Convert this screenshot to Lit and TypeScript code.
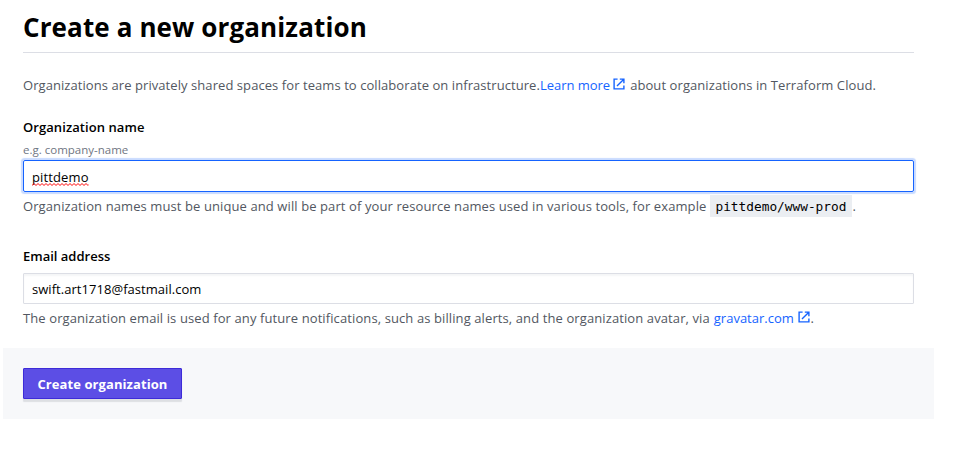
import { LitElement, html, css } from "lit";
import { customElement, state } from "lit/decorators.js";

const externalIcon = html`<svg class="ext" viewBox="0 0 12 12" width="12" height="12" aria-hidden="true">
  <path d="M4.6 1.1H1.1v9.8h9.8V7.4M6.8 1.1h4.1v4.1M10.8 1.2 4 8" fill="none" stroke="currentColor" stroke-width="1.4" />
</svg>`;

@customElement("app-root")
export class AppRoot extends LitElement {
  @state() private orgName = "pittdemo";
  @state() private email = "swift.art1718@fastmail.com";

  static styles = css`
    :host {
      display: block;
      height: 461px;
      overflow: hidden;
      background: #fff;
      color: #000;
      font: 13px/20px "Open Sans", "Noto Sans", sans-serif;
      white-space: nowrap;
    }
    .page { width: 891px; margin-left: 23px; }
    h1 {
      margin: 0;
      padding-top: 3px;
      border-bottom: 1px solid #dcdee5;
      font-size: 26px;
      line-height: 49px;
      font-weight: 700;
      letter-spacing: 0.12px;
    }
    p { margin: 0; color: #525761; display: flex; }
    .intro { margin-top: 22px; letter-spacing: 0.068px; }
    .link { color: #1563ff; display: flex; letter-spacing: -0.03px; }
    .ext { display: block; margin: 3px 0 0 3px; }
    .rest { margin-left: 5px; letter-spacing: 0.08px; }
    label { display: block; font-weight: 600; }
    .name-label { margin-top: 22px; letter-spacing: 0.07px; }
    .email-label { margin-top: 30px; }
    .hint { display: block; margin-top: 5px; line-height: 16px; font-size: 11.5px; color: #6f7682; }
    .input { box-sizing: border-box; border: 1px solid #dcdee5; border-radius: 1px; padding-left: 8px; }
    .name {
      height: 32px;
      margin-top: 2px;
      padding-top: 6px;
      border-color: #1563ff;
      border-radius: 2px;
      box-shadow: 0 0 1px 1.5px #c9dbff;
      letter-spacing: 0.12px;
    }
    .misspelt { position: relative; display: inline-block; }
    .squiggle { position: absolute; left: 0; top: 16px; width: 100%; height: 3px; }
    .email {
      height: 31px;
      margin-top: 7px;
      padding-top: 5px;
      box-shadow: inset 0 2px 2px #f5f6f7;
      letter-spacing: 0.045px;
    }
    .help { margin-top: 4px; letter-spacing: 0.097px; }
    .help-email { letter-spacing: 0.102px; }
    code {
      margin: -1px 0 -1px 4px;
      padding: 1px 6px 0 5px;
      line-height: 21px;
      background: #ebeef2;
      color: #000;
      font-family: "DejaVu Sans Mono", monospace;
      font-size: 12.8px;
      letter-spacing: 0;
    }
    .help-email .link { margin-left: 4px; letter-spacing: 0; }
    .help-email .ext { margin: 3px 0 0 4.6px; }
    footer {
      box-sizing: border-box;
      width: 931px;
      height: 71px;
      margin: 20px 0 0 3px;
      padding: 20px;
      background: #f7f8fa;
    }
    button {
      display: block;
      box-sizing: border-box;
      width: 159px;
      height: 31px;
      padding: 1px 0 0;
      border: 1px solid #3d2bd8;
      border-radius: 1px;
      background: #5c4ee5;
      box-shadow: 0 3px 1px #dddfe3;
      color: #fff;
      font: inherit;
      font-weight: 700;
      letter-spacing: 0.08px;
    }
  `;

  render() {
    return html`
      <main class="page">
        <h1>Create a new organization</h1>
        <p class="intro">
          <span>Organizations are privately shared spaces for teams to collaborate on infrastructure.</span>
          <a class="link">Learn more${externalIcon}</a>
          <span class="rest">about organizations in Terraform Cloud.</span>
        </p>
        <label class="name-label">Organization name</label>
        <span class="hint">e.g. company-name</span>
        <div class="input name" role="textbox">
          <span class="misspelt">${this.orgName}<svg class="squiggle" aria-hidden="true">
            <defs>
              <pattern id="wave" width="4" height="3" patternUnits="userSpaceOnUse">
                <path d="M-1 1.5 0 2.5 2 .5 4 2.5 5 1.5" fill="none" stroke="#f00" stroke-width="1" />
              </pattern>
            </defs>
            <rect width="100%" height="3" fill="url(#wave)" />
          </svg></span>
        </div>
        <p class="help">
          <span>Organization names must be unique and will be part of your resource names used in various tools, for example</span>
          <code>${this.orgName}/www-prod</code><span>.</span>
        </p>
        <label class="email-label">Email address</label>
        <div class="input email" role="textbox">${this.email}</div>
        <p class="help help-email">
          <span>The organization email is used for any future notifications, such as billing alerts, and the organization avatar, via</span>
          <a class="link">gravatar.com${externalIcon}</a><span>.</span>
        </p>
      </main>
      <footer><button>Create organization</button></footer>
    `;
  }
}
